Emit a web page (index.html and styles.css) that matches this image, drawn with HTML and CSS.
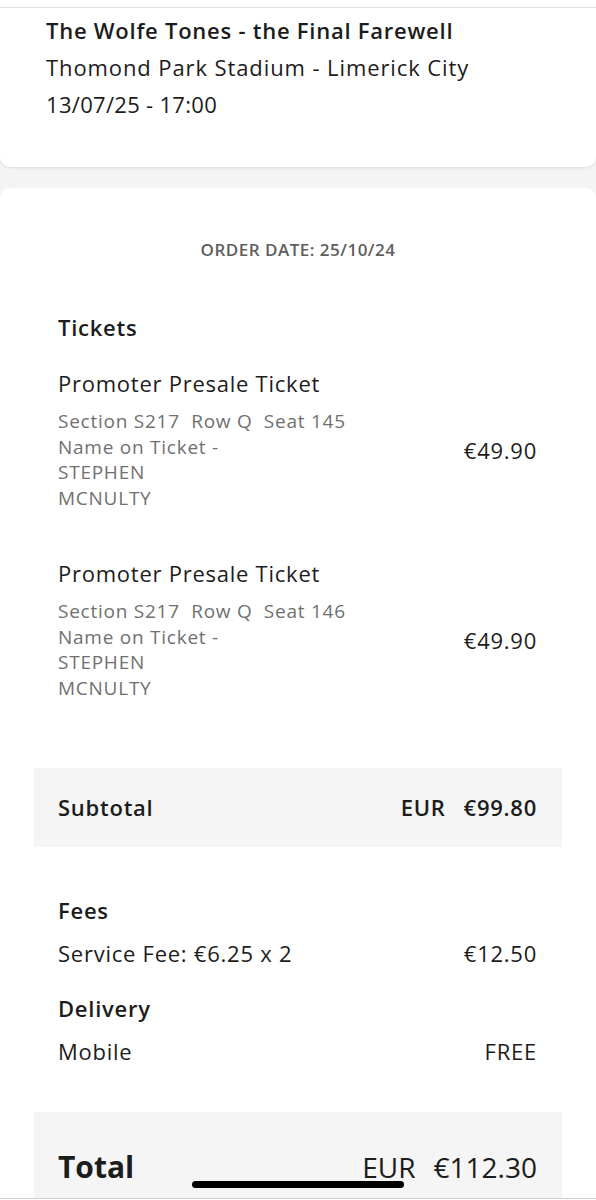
FILE: index.html
```html
<!DOCTYPE html>
<html lang="en">
<head>
<meta charset="utf-8">
<title>Order</title>
<link rel="stylesheet" href="styles.css">
</head>
<body>
<div class="page">
  <section class="event-card">
    <div class="event-title">The Wolfe Tones - the Final Farewell</div>
    <div class="event-line">Thomond Park Stadium - Limerick City</div>
    <div class="event-line date">13/07/25 - 17:00</div>
  </section>

  <section class="order-card">
    <div class="order-date">ORDER DATE: 25/10/24</div>

    <div class="block tickets">
      <div class="heading">Tickets</div>

      <div class="ticket">
        <div class="ticket-name">Promoter Presale Ticket</div>
        <div class="ticket-row">
          <div class="ticket-details">
            <div>Section S217&nbsp; Row Q&nbsp; Seat 145</div>
            <div>Name on Ticket -</div>
            <div>STEPHEN</div>
            <div>MCNULTY</div>
          </div>
          <div class="price">€49.90</div>
        </div>
      </div>

      <div class="ticket second">
        <div class="ticket-name">Promoter Presale Ticket</div>
        <div class="ticket-row">
          <div class="ticket-details">
            <div>Section S217&nbsp; Row Q&nbsp; Seat 146</div>
            <div>Name on Ticket -</div>
            <div>STEPHEN</div>
            <div>MCNULTY</div>
          </div>
          <div class="price">€49.90</div>
        </div>
      </div>
    </div>

    <div class="sum-box subtotal">
      <div class="sum-label">Subtotal</div>
      <div class="sum-amount"><span>EUR</span><span>€99.80</span></div>
    </div>

    <div class="block fees">
      <div class="heading">Fees</div>
      <div class="line"><span>Service Fee: €6.25 x 2</span><span>€12.50</span></div>
      <div class="heading delivery">Delivery</div>
      <div class="line"><span>Mobile</span><span>FREE</span></div>
    </div>

    <div class="sum-box total">
      <div class="sum-label">Total</div>
      <div class="sum-amount"><span>EUR</span><span>€112.30</span></div>
    </div>
  </section>
</div>
<div class="bottom-edge"></div>
<div class="home-indicator"></div>
</body>
</html>
```

FILE: styles.css
```css
* { box-sizing: border-box; }

html, body {
  margin: 0;
  padding: 0;
  background: #ffffff;
}

body {
  font-family: "Open Sans", Lato, "Noto Sans", Arial, sans-serif;
  color: #1c1c1c;
  width: 596px;
  height: 1200px;
  overflow: hidden;
  letter-spacing: 0.75px;
}

.page {
  margin-top: 7px;
  background: #f4f4f4;
  min-height: 1193px;
}

.event-card {
  background: #ffffff;
  border-top: 1px solid #e3e3e3;
  border-radius: 0 0 10px 10px;
  box-shadow: 0 1px 3px rgba(0, 0, 0, 0.10);
  padding: 4px 46px 44px 46px;
  height: 160px;
}

.event-title {
  font-size: 22px;
  font-weight: 600;
  line-height: 37px;
}

.event-line {
  font-size: 22px;
  line-height: 37px;
  letter-spacing: 0.9px;
}

.event-line.date {
  letter-spacing: 0.3px;
}

.order-card {
  margin-top: 21px;
  background: #ffffff;
  border-radius: 10px 10px 0 0;
  padding: 52px 34px 0 34px;
  min-height: 1100px;
}

.order-date {
  text-align: center;
  font-size: 17px;
  font-weight: 600;
  color: #5e5e5e;
  line-height: 20px;
  letter-spacing: 0.5px;
}

.block {
  padding: 0 25px 0 24px;
}

.tickets {
  margin-top: 53px;
}

.heading {
  font-size: 22px;
  font-weight: 600;
  line-height: 28px;
}

.ticket {
  margin-top: 28px;
}

.ticket.second {
  margin-top: 47px;
}

.ticket-name {
  font-size: 22px;
  line-height: 28px;
}

.ticket-row {
  display: flex;
  justify-content: space-between;
  align-items: flex-start;
  margin-top: 12px;
}

.ticket-details {
  font-size: 19px;
  line-height: 25.7px;
  color: #707070;
}

.price {
  font-size: 22px;
  line-height: 28px;
  margin-top: 27px;
}

.sum-box {
  background: #f5f5f5;
  display: flex;
  justify-content: space-between;
  align-items: center;
  padding: 0 25px 0 24px;
}

.subtotal {
  margin-top: 66px;
  height: 79px;
  font-size: 22px;
  font-weight: 600;
}

.sum-amount {
  display: flex;
  gap: 18px;
}

.fees {
  margin-top: 49px;
}

.line {
  display: flex;
  justify-content: space-between;
  font-size: 22px;
  line-height: 28px;
  margin-top: 15px;
}

.heading.delivery {
  margin-top: 27px;
}

.total {
  margin-top: 47px;
  height: 130px;
  align-items: flex-start;
  padding-top: 36px;
  font-size: 28px;
  line-height: 38px;
  letter-spacing: 0;
}

.total .sum-label {
  font-size: 30px;
  font-weight: 700;
}

.total .sum-amount {
  font-weight: 400;
}

.bottom-edge {
  position: fixed;
  left: 0;
  right: 0;
  bottom: 0;
  height: 2px;
  border-top: 1px solid #cfcfcf;
  background: #ffffff;
}

.home-indicator {
  position: fixed;
  left: 192px;
  top: 1181px;
  width: 212px;
  height: 7px;
  border-radius: 4px;
  background: #000000;
}
```
